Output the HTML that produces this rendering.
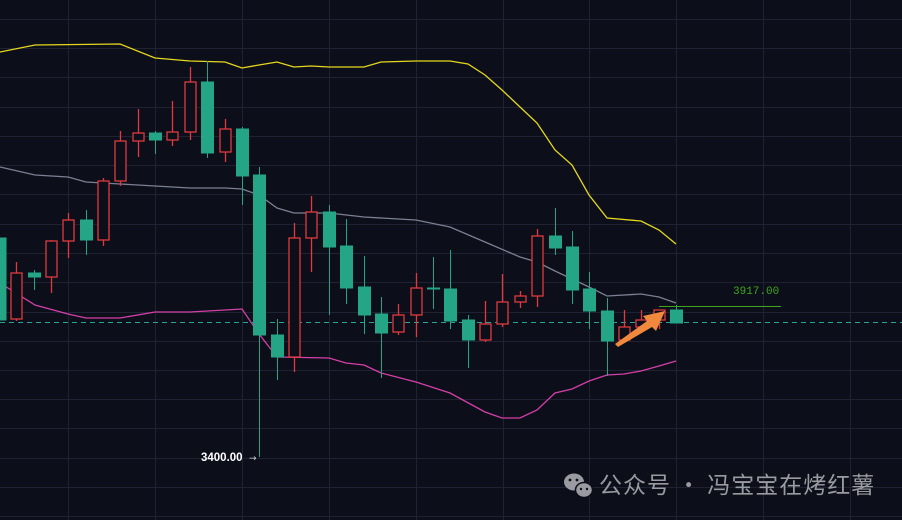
<!DOCTYPE html>
<html><head><meta charset="utf-8"><style>
html,body{margin:0;padding:0;background:#0c0f1a;width:902px;height:520px;overflow:hidden}
svg{display:block}
</style></head><body>
<svg width="902" height="520" viewBox="0 0 902 520" xmlns="http://www.w3.org/2000/svg">
<rect width="902" height="520" fill="#0c0f1a"/>
<g stroke="#1e2232" stroke-width="1">
<line x1="0" y1="19.5" x2="902" y2="19.5"/><line x1="0" y1="48.5" x2="902" y2="48.5"/><line x1="0" y1="77.5" x2="902" y2="77.5"/><line x1="0" y1="107.5" x2="902" y2="107.5"/><line x1="0" y1="136.5" x2="902" y2="136.5"/><line x1="0" y1="165.5" x2="902" y2="165.5"/><line x1="0" y1="194.5" x2="902" y2="194.5"/><line x1="0" y1="224.5" x2="902" y2="224.5"/><line x1="0" y1="253.5" x2="902" y2="253.5"/><line x1="0" y1="282.5" x2="902" y2="282.5"/><line x1="0" y1="312.5" x2="902" y2="312.5"/><line x1="0" y1="341.5" x2="902" y2="341.5"/><line x1="0" y1="370.5" x2="902" y2="370.5"/><line x1="0" y1="399.5" x2="902" y2="399.5"/><line x1="0" y1="428.5" x2="902" y2="428.5"/><line x1="0" y1="458.5" x2="902" y2="458.5"/><line x1="0" y1="487.5" x2="902" y2="487.5"/><line x1="0" y1="516.5" x2="902" y2="516.5"/>
<line x1="68.5" y1="0" x2="68.5" y2="520"/><line x1="155.5" y1="0" x2="155.5" y2="520"/><line x1="242.5" y1="0" x2="242.5" y2="520"/><line x1="329.5" y1="0" x2="329.5" y2="520"/><line x1="416.5" y1="0" x2="416.5" y2="520"/><line x1="503.5" y1="0" x2="503.5" y2="520"/><line x1="589.5" y1="0" x2="589.5" y2="520"/><line x1="676.5" y1="0" x2="676.5" y2="520"/><line x1="763.5" y1="0" x2="763.5" y2="520"/><line x1="850.5" y1="0" x2="850.5" y2="520"/>
</g>
<line x1="0" y1="322.5" x2="902" y2="322.5" stroke="#26a69a" stroke-width="1" stroke-dasharray="5,4"/>
<polyline fill="none" stroke="#e6d71e" stroke-width="1.3" points="0,52 35,45 120,44 155,58 190,61 225,62 242,68 259,65 277,62 294,67 311,66 329,67 364,67 381,62 416,61 450,61 468,64 485,75 502,90 520,107 537,123 555,150 572,165 589,195 607,218 641,221 659,230 676,244"/>
<polyline fill="none" stroke="#7b7f93" stroke-width="1.3" points="0,167 35,175 68,177 86,182 120,184 155,186 190,188 225,188 242,189 259,195 277,208 294,213 329,213 364,217 416,220 450,227 485,242 520,257 537,262 555,271 572,279 589,287 607,296 641,294 659,297 676,303"/>
<polyline fill="none" stroke="#d43fa8" stroke-width="1.3" points="0,283 35,305 68,314 86,318 120,318 155,312 190,312 225,310 242,309 259,334 277,357 329,358 346,363 364,365 381,373 416,382 450,393 485,412 502,418 520,418 537,410 555,393 572,389 589,381 607,375 624,374 641,371 659,366 676,361"/>
<g stroke="#24a585" fill="#24a585" stroke-width="1">
<rect x="0" y="238" width="6" height="82"/>
<line x1="34.5" y1="270" x2="34.5" y2="290"/><rect x="28.5" y="273" width="12" height="4"/>
<line x1="86.5" y1="210" x2="86.5" y2="255"/><rect x="80.5" y="220" width="12" height="20"/>
<line x1="155.5" y1="131" x2="155.5" y2="154"/><rect x="149.5" y="133" width="12" height="7"/>
<line x1="207.5" y1="61" x2="207.5" y2="158"/><rect x="201.5" y="82" width="12" height="71"/>
<line x1="242.5" y1="127" x2="242.5" y2="205"/><rect x="236.5" y="129" width="12" height="47"/>
<line x1="259.5" y1="167" x2="259.5" y2="457"/><rect x="253.5" y="175" width="12" height="160"/>
<line x1="277.5" y1="319" x2="277.5" y2="380"/><rect x="271.5" y="335" width="12" height="22"/>
<line x1="329.5" y1="205" x2="329.5" y2="315"/><rect x="323.5" y="212" width="12" height="35"/>
<line x1="346.5" y1="219" x2="346.5" y2="304"/><rect x="340.5" y="246" width="12" height="42"/>
<line x1="364.5" y1="256" x2="364.5" y2="334"/><rect x="358.5" y="287" width="12" height="28"/>
<line x1="381.5" y1="297" x2="381.5" y2="378"/><rect x="375.5" y="314" width="12" height="19"/>
<line x1="433.5" y1="257" x2="433.5" y2="309"/><rect x="427.5" y="288" width="12" height="1"/>
<line x1="450.5" y1="250" x2="450.5" y2="329"/><rect x="444.5" y="289" width="12" height="32"/>
<line x1="468.5" y1="315" x2="468.5" y2="368"/><rect x="462.5" y="320" width="12" height="20"/>
<line x1="555.5" y1="208" x2="555.5" y2="255"/><rect x="549.5" y="236" width="12" height="12"/>
<line x1="572.5" y1="231" x2="572.5" y2="304"/><rect x="566.5" y="247" width="12" height="43"/>
<line x1="589.5" y1="272" x2="589.5" y2="329"/><rect x="583.5" y="289" width="12" height="22"/>
<line x1="607.5" y1="298" x2="607.5" y2="376"/><rect x="601.5" y="311" width="12" height="30"/>
<line x1="676.5" y1="305" x2="676.5" y2="323"/><rect x="670.5" y="310" width="12" height="13"/>
</g>
<g stroke="#e0393e" fill="#0c0f1a" stroke-width="1.3">
<line x1="16.5" y1="262" x2="16.5" y2="321"/><rect x="11" y="273" width="11" height="46"/>
<line x1="51.5" y1="240" x2="51.5" y2="293"/><rect x="46" y="241" width="11" height="36"/>
<line x1="68.5" y1="213" x2="68.5" y2="258"/><rect x="63" y="220" width="11" height="21"/>
<line x1="103.5" y1="178" x2="103.5" y2="246"/><rect x="98" y="181" width="11" height="59"/>
<line x1="120.5" y1="131" x2="120.5" y2="186"/><rect x="115" y="141" width="11" height="40"/>
<line x1="138.5" y1="109" x2="138.5" y2="157"/><rect x="133" y="133" width="11" height="8"/>
<line x1="172.5" y1="101" x2="172.5" y2="146"/><rect x="167" y="132" width="11" height="8"/>
<line x1="190.5" y1="67" x2="190.5" y2="140"/><rect x="185" y="82" width="11" height="50"/>
<line x1="225.5" y1="119" x2="225.5" y2="162"/><rect x="220" y="129" width="11" height="23"/>
<line x1="294.5" y1="223" x2="294.5" y2="372"/><rect x="289" y="238" width="11" height="119"/>
<line x1="311.5" y1="196" x2="311.5" y2="272"/><rect x="306" y="212" width="11" height="26"/>
<line x1="398.5" y1="304" x2="398.5" y2="335"/><rect x="393" y="315" width="11" height="17"/>
<line x1="416.5" y1="273" x2="416.5" y2="337"/><rect x="411" y="288" width="11" height="27"/>
<line x1="485.5" y1="301" x2="485.5" y2="342"/><rect x="480" y="324" width="11" height="16"/>
<line x1="502.5" y1="274" x2="502.5" y2="327"/><rect x="497" y="302" width="11" height="22"/>
<line x1="520.5" y1="291" x2="520.5" y2="308"/><rect x="515" y="296" width="11" height="6"/>
<line x1="537.5" y1="229" x2="537.5" y2="307"/><rect x="532" y="236" width="11" height="60"/>
<line x1="624.5" y1="310" x2="624.5" y2="342"/><rect x="619" y="327" width="11" height="13"/>
<line x1="641.5" y1="310" x2="641.5" y2="330"/><rect x="636" y="320" width="11" height="7"/>
<line x1="659.5" y1="310" x2="659.5" y2="329"/><rect x="654" y="310" width="11" height="10"/>
</g>
<line x1="659" y1="306.5" x2="781" y2="306.5" stroke="#3fa51c" stroke-width="1"/>
<text x="733" y="294" fill="#3fa51c" font-family="Liberation Mono, monospace" font-size="11">3917.00</text>
<polygon points="615,344 647,321 643,316 665,311 656,331 652,327 618,347" fill="#f0883e"/>
<text x="201" y="461" fill="#ffffff" font-family="Liberation Sans, sans-serif" font-size="11.5" font-weight="bold">3400.00</text>
<text x="249" y="461" fill="#cccccc" font-family="DejaVu Sans, sans-serif" font-size="9">→</text>
<g fill="#9a9ba0">
<ellipse cx="574" cy="482" rx="10" ry="8.5"/>
<ellipse cx="584" cy="490" rx="8.5" ry="7.5" stroke="#0c0f1a" stroke-width="1.5"/>
<circle cx="570" cy="480" r="1.4" fill="#0c0f1a"/><circle cx="577" cy="480" r="1.4" fill="#0c0f1a"/>
<circle cx="581" cy="489" r="1.2" fill="#0c0f1a"/><circle cx="587" cy="489" r="1.2" fill="#0c0f1a"/>
</g>
<text x="599" y="493" fill="#9a9ba0" font-family="'Noto Sans CJK SC', sans-serif" font-size="23" letter-spacing="1">公众号 · 冯宝宝在烤红薯</text>
</svg>
</body></html>
